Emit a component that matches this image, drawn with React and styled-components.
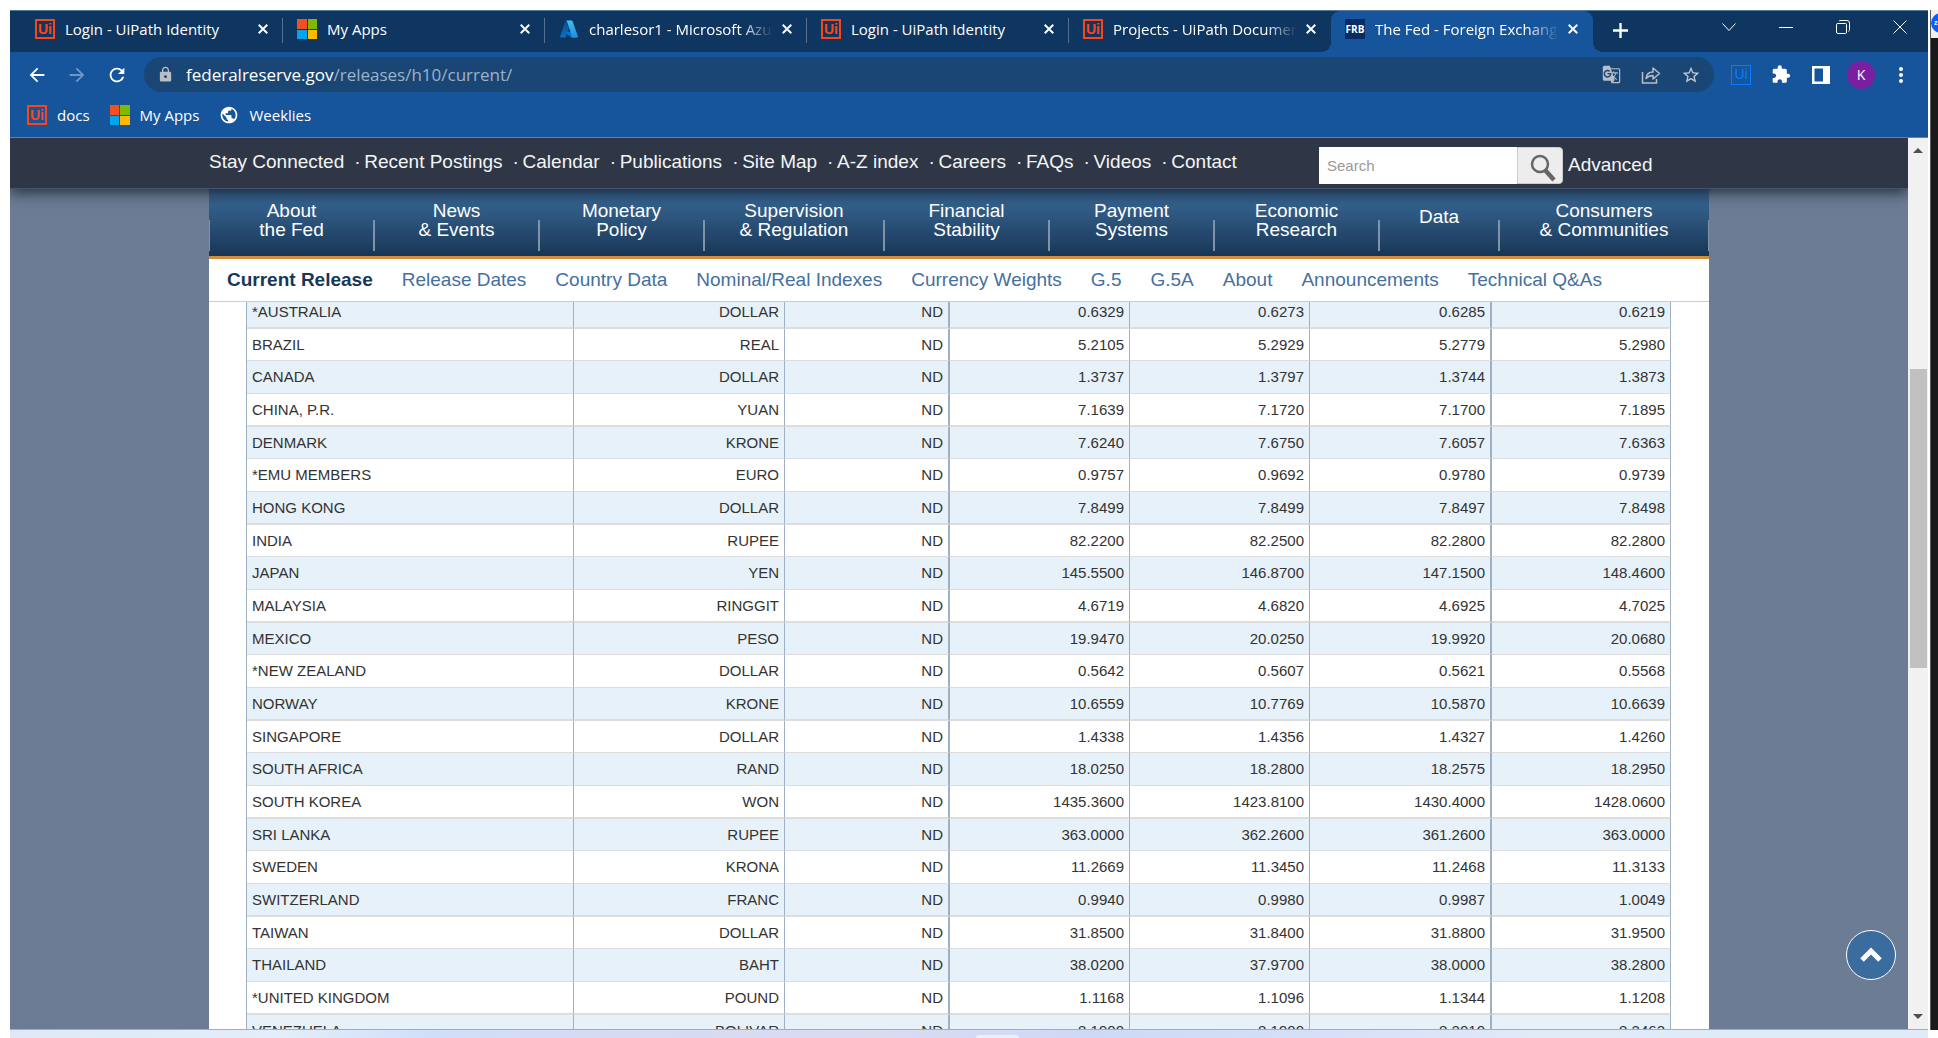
import React from "react";
import styled, { createGlobalStyle, css } from "styled-components";
import { MdExtension, MdPublic, MdLock, MdRefresh, MdArrowBack, MdArrowForward, MdGTranslate, MdStarBorder } from "react-icons/md";

const GlobalStyle = createGlobalStyle`
  *, *::before, *::after { box-sizing: border-box; }
  html, body, #root { height: 100%; }
  body {
    margin: 0;
    overflow: hidden;
    background: #fff;
    font-family: "Liberation Sans", Arial, sans-serif;
  }
  button, input { font: inherit; margin: 0; }
  a { color: inherit; text-decoration: none; }
`;

const chromeFont = css`
  font-family: "Open Sans", "Segoe UI", sans-serif;
`;

/* ---------- desktop ---------- */

const Desktop = styled.div`
  height: 100vh;
  display: flex;
  flex-direction: column;
  padding: 10px 0 0 10px;
`;

const DesktopRow = styled.div`
  flex: 1;
  min-height: 0;
  display: flex;
  gap: 2px;
`;

const Window = styled.div`
  flex: 1;
  min-width: 0;
  display: flex;
  flex-direction: column;
  background: #16549b;
  border-top: 1px solid #55799b;
  border-bottom: 1px solid #a3acbd;
`;

const NeighbourWindow = styled.aside`
  width: 8px;
  display: flex;
  flex-direction: column;
  overflow: hidden;
  background: #1a1a1a;
  border-left: 1px solid #5a5a5a;
`;

const NeighbourTitle = styled.div`
  height: 28px;
  flex: none;
  margin-left: -1px;
  padding: 3px 0 0 1px;
  background: #f0f0f0;
`;

const ZoomLogo = styled.div`
  width: 20px;
  height: 20px;
  border-radius: 50%;
  background: #0b5cff;
  color: #fff;
  font-size: 7px;
  font-weight: bold;
  line-height: 20px;
  padding-left: 3px;
`;

const Taskbar = styled.div`
  height: 8px;
  flex: none;
  display: flex;
  justify-content: center;
  align-items: flex-end;
  margin-right: 10px;
  padding-left: 56px;
  background: linear-gradient(90deg, #dfe8f4 0%, #e3eefa 14%, #cfdffa 22%, #d6dbf4 30%, #dadcf0 45%, #ced9f7 56%, #d3def8 66%, #e0eaf8 80%, #dfebf8 100%);
`;

const TaskbarItem = styled.div`
  width: 43px;
  height: 3px;
  border-radius: 4px 4px 0 0;
  background: #eaf0fc;
`;

/* ---------- tab strip ---------- */

const TabStrip = styled.div`
  height: 41px;
  flex: none;
  display: flex;
  padding-left: 11px;
  background: #0f3661;
  color: #fff;
  ${chromeFont}
`;

const Tab = styled.div`
  position: relative;
  width: 262px;
  display: flex;
  align-items: center;
  padding: 0 12px 5px 14px;
  font-size: 15px;
  &::after {
    content: "";
    position: absolute;
    right: 0;
    top: 7px;
    width: 1px;
    height: 25px;
    background: ${(p) => (p.$divider ? "#55718e" : "transparent")};
  }
  ${(p) =>
    p.$active &&
    css`
      background: #16549b;
      border-radius: 9px 9px 0 0;
      &::before,
      &::after {
        content: "";
        position: absolute;
        top: auto;
        bottom: 0;
        width: 10px;
        height: 10px;
      }
      &::before {
        left: -10px;
        background: radial-gradient(circle at 0 0, transparent 10px, #16549b 10px);
      }
      &::after {
        right: -10px;
        background: radial-gradient(circle at 100% 0, transparent 10px, #16549b 10px);
      }
    `}
`;

const TabTitle = styled.span`
  flex: 1;
  min-width: 0;
  margin: 0 6px 0 10px;
  overflow: hidden;
  white-space: nowrap;
  ${(p) =>
    p.$fade &&
    css`
      mask-image: linear-gradient(90deg, #000 calc(100% - 32px), transparent);
    `}
`;

const IconButton = styled.button`
  width: ${(p) => p.$size || 20}px;
  height: ${(p) => p.$size || 20}px;
  flex: none;
  display: flex;
  align-items: center;
  justify-content: center;
  padding: 0;
  border: 0;
  background: none;
  color: ${(p) => p.$color || "#fff"};
`;

const NewTab = styled(IconButton)`
  margin: 9px 0 0 17px;
`;

const WindowControls = styled.div`
  margin-left: auto;
  display: flex;
  gap: 37px;
  padding: 6px 18px 0 0;
`;

const FrbIcon = styled.span`
  width: 20px;
  height: 20px;
  flex: none;
  background: #0a2a63;
  color: #fff;
  font-size: 10px;
  font-weight: 700;
  line-height: 20px;
  text-align: center;
`;

const UiFrame = styled.span`
  width: 20px;
  height: 20px;
  flex: none;
  border: ${(p) => p.$line || 2}px solid ${(p) => p.$color || "#fa4616"};
  color: ${(p) => p.$color || "#fa4616"};
  font: ${(p) => (p.$line ? 400 : 700)} 14px/16px "Liberation Sans", Arial, sans-serif;
  text-align: center;
`;

const MsGrid = styled.span`
  width: 20px;
  height: 20px;
  flex: none;
  display: grid;
  grid-template-columns: 1fr 1fr;
  gap: 1px;
`;

const Swatch = styled.span`
  background: ${(p) => p.$color};
`;

/* ---------- toolbar ---------- */

const Toolbar = styled.div`
  height: 45px;
  flex: none;
  display: flex;
  align-items: center;
  padding: 0 17px 0 16px;
  color: #fff;
  ${chromeFont}
`;

const NavButtons = styled.div`
  display: flex;
  gap: 18px;
  width: 118px;
`;

const Omnibox = styled.div`
  flex: 1;
  height: 35px;
  display: flex;
  align-items: center;
  padding: 0 13px;
  border-radius: 18px;
  background: #1a4676;
  color: #b9bec4;
`;

const Address = styled.div`
  flex: 1;
  margin-left: 12px;
  font-size: 17px;
  color: #9db2c8;
  white-space: nowrap;
`;

const Host = styled.span`
  color: #fff;
`;

const IconRow = styled.div`
  display: flex;
  align-items: center;
  gap: 20px;
`;

const Extensions = styled(IconRow)`
  margin-left: 17px;
  gap: 16px;
`;

const Avatar = styled.button`
  width: 28px;
  height: 28px;
  padding: 0;
  border: 0;
  border-radius: 50%;
  background: #7b1fa2;
  color: #fff;
  font-size: 14px;
`;

const Bookmarks = styled.nav`
  height: 41px;
  flex: none;
  display: flex;
  gap: 20px;
  padding: 2px 17px 0;
  border-bottom: 1px solid #5c82b5;
  color: #fff;
  ${chromeFont}
`;

const Bookmark = styled.a`
  display: flex;
  align-items: center;
  gap: 10px;
  height: 32px;
  font-size: 15px;
`;

/* ---------- page ---------- */

const Viewport = styled.div`
  flex: 1;
  min-height: 0;
  display: flex;
`;

const Page = styled.div`
  position: relative;
  flex: 1;
  min-width: 0;
  display: flex;
  flex-direction: column;
  overflow: hidden;
  background: #6b7c94;
`;

const UtilityBar = styled.header`
  position: relative;
  z-index: 2;
  height: 51px;
  flex: none;
  background: #2f3746;
  border-bottom: 1px solid #46536a;
  box-shadow: 0 3px 14px rgba(20, 26, 36, 0.85);
  color: #f4f5f7;
`;

const Container = styled.div`
  width: 1500px;
  max-width: 100%;
  margin: 0 auto;
`;

const UtilityInner = styled(Container)`
  display: flex;
  align-items: flex-start;
`;

const UtilityLinks = styled.ul`
  display: flex;
  margin: 0;
  padding: 13px 0 0;
  list-style: none;
  font-size: 19px;
  line-height: 22px;
  white-space: nowrap;
`;

const UtilityItem = styled.li`
  & + &::before {
    content: "·";
    display: inline-block;
    width: 20px;
    padding-left: 10px;
  }
`;

const SearchForm = styled.form`
  display: flex;
  align-items: center;
  flex: none;
  margin-left: auto;
  width: 390px;
  padding-top: 9px;
`;

const SearchInput = styled.input`
  width: 198px;
  height: 37px;
  padding: 0 8px;
  border: 0;
  border-radius: 0;
  background: #fff;
  font-size: 15px;
  &::placeholder {
    color: #999;
    opacity: 1;
  }
`;

const SearchButton = styled.button`
  width: 46px;
  height: 37px;
  padding: 3px 0 0 6px;
  display: flex;
  align-items: center;
  justify-content: center;
  border: 1px solid #ccc;
  border-radius: 0 4px 4px 0;
  background: #ededed;
`;

const Advanced = styled.a`
  margin-left: 5px;
  padding-bottom: 2px;
  font-size: 19px;
  line-height: 22px;
`;

const MainNav = styled.nav`
  height: 70px;
  flex: none;
  display: flex;
  border-bottom: 3px solid #d28c3c;
  background: linear-gradient(#33628f, #335f8a 25%, #183656);
  color: #fff;
`;

const MainNavItem = styled.a`
  position: relative;
  flex: ${(p) => p.$w} 1 0;
  padding: ${(p) => (p.$single ? 18 : 12)}px 0 0;
  font-size: 19px;
  line-height: 19px;
  text-align: center;
  white-space: pre-line;
  &::after {
    content: "";
    position: absolute;
    top: 31px;
    right: -1px;
    width: 2px;
    height: 31px;
    background: #7f93a8;
  }
  &:first-child::before {
    content: "";
    position: absolute;
    top: 31px;
    left: 0;
    width: 1px;
    height: 31px;
    background: #7f93a8;
  }
  &:last-child::after {
    right: 0;
    width: 1px;
  }
`;

const SubNav = styled.nav`
  position: relative;
  z-index: 1;
  height: 43px;
  flex: none;
  display: flex;
  gap: 29px;
  padding: 9px 18px 0;
  border-bottom: 1px solid #ccc;
  background: #fff;
  color: #44709f;
  font-size: 19px;
  line-height: 24px;
  white-space: nowrap;
`;

const SubNavLink = styled.a`
  ${(p) =>
    p.$current &&
    css`
      color: #17375a;
      font-weight: bold;
    `}
`;

const Content = styled(Container)`
  flex: 1;
  min-height: 0;
  display: flex;
  flex-direction: column;
  overflow: hidden;
  background: #fff;
`;

const TableArea = styled.main`
  flex: 1;
  min-height: 0;
  margin-top: -6px;
  padding: 0 38px 0 37px;
  overflow: hidden;
`;

const RatesTable = styled.table`
  width: 100%;
  table-layout: fixed;
  border-collapse: separate;
  border-spacing: 0;
  border-left: 1px solid #9fb1c1;
  color: #333;
  font-size: 15px;
  line-height: 17px;
`;

const Col = styled.col`
  width: ${(p) => p.$share * 100}%;
`;

const Row = styled.tr`
  height: 33px;
  & > * {
    padding: 0 5px;
    text-align: right;
    font-weight: normal;
    border-right: 1px solid #9fb1c1;
    border-bottom: 1px solid #ddd;
  }
  & > :nth-child(3),
  & > :nth-child(6) {
    border-right-width: 2px;
  }
  & > :first-child {
    text-align: left;
  }
  &:nth-child(odd) {
    background: #e6f1f9;
  }
  &:nth-child(3n + 1) > * {
    border-bottom-width: 2px;
  }
  &:nth-child(3n + 2) {
    height: 32px;
  }
  &:nth-child(3n) > * {
    padding-bottom: 1px;
  }
`;

const ToTop = styled.a`
  position: absolute;
  right: 12px;
  bottom: 49px;
  width: 50px;
  height: 50px;
  display: flex;
  align-items: center;
  justify-content: center;
  border: 1px solid #fff;
  border-radius: 50%;
  background: #3a6d9e;
`;

const Scrollbar = styled.div`
  width: 20px;
  flex: none;
  display: flex;
  flex-direction: column;
  align-items: center;
  background: #f1f1f1;
`;

const Arrow = styled.span`
  width: 0;
  height: 0;
  margin: 10px 0;
  border: 5px solid transparent;
  ${(p) =>
    p.$up
      ? css`
          border-top: 0;
          border-bottom-color: #505050;
        `
      : css`
          border-bottom: 0;
          border-top-color: #505050;
        `}
`;

const Track = styled.div`
  flex: 1;
  display: grid;
  grid-template-rows: 49fr 71fr 80fr;
`;

const Thumb = styled.div`
  grid-row: 2;
  width: 17px;
  background: #c1c1c1;
`;

/* ---------- icons ---------- */

const UiIcon = ({ color, line }) => (
  <UiFrame $color={color} $line={line}>Ui</UiFrame>
);

const MicrosoftIcon = () => (
  <MsGrid>
    <Swatch $color="#f25022" />
    <Swatch $color="#7fba00" />
    <Swatch $color="#00a4ef" />
    <Swatch $color="#ffb900" />
  </MsGrid>
);

const AzureIcon = () => (
  <svg width="20" height="20" viewBox="0 0 20 20">
    <defs>
      <linearGradient id="azl" x1="0.6" y1="0" x2="0.3" y2="1">
        <stop offset="0" stopColor="#114a8b" />
        <stop offset="1" stopColor="#0a70c4" />
      </linearGradient>
      <linearGradient id="azr" x1="0" y1="0" x2="0.6" y2="1">
        <stop offset="0" stopColor="#3ccbf4" />
        <stop offset="1" stopColor="#2892df" />
      </linearGradient>
    </defs>
    <path d="M7.2 1.5h5.2L7 17.8a.9.9 0 0 1-.8.6H2a.8.8 0 0 1-.8-1.1L6.4 2.1a.9.9 0 0 1 .8-.6z" fill="url(#azl)" />
    <path d="M15 12.7H6.9a.4.4 0 0 0-.3.7l5.3 4.8c.2.1.3.2.5.2h4.6z" fill="#0078d4" />
    <path d="M13.5 2.1a.9.9 0 0 0-.8-.6H7.1c.4 0 .7.2.8.6l5.2 15.2a.8.8 0 0 1-.8 1.1h5.8a.8.8 0 0 0 .8-1.1z" fill="url(#azr)" />
  </svg>
);

const Lines = ({ d, size = 14, w = 1, color = "currentColor" }) => (
  <svg width={size} height={size} viewBox="0 0 14 14" fill="none" stroke={color} strokeWidth={w}>
    <path d={d} />
  </svg>
);

const ShareIcon = () => (
  <svg width="20" height="20" viewBox="0 0 20 20" fill="none" stroke="currentColor" strokeWidth="1.5">
    <path d="M1.5 7v11h14v-4" />
    <path d="M5 13.5c.5-4.5 3-6.5 7-6.5V3L18.5 8.5 12 14v-3.5c-3 0-5 .8-7 3z" strokeLinejoin="round" />
  </svg>
);

const SearchIcon = () => (
  <svg width="28" height="31" viewBox="0 0 28 31" fill="none" stroke="#666">
    <circle cx="11" cy="12" r="8" strokeWidth="2.5" />
    <path d="M16.5 18.5L25 28" strokeWidth="4.5" />
  </svg>
);

/* ---------- data ---------- */

const TABS = [
  { title: "Login - UiPath Identity", icon: <UiIcon />, divider: true },
  { title: "My Apps", icon: <MicrosoftIcon />, divider: true },
  { title: "charlesor1 - Microsoft Azure", icon: <AzureIcon />, divider: true, fade: true },
  { title: "Login - UiPath Identity", icon: <UiIcon />, divider: true },
  { title: "Projects - UiPath Documentation", icon: <UiIcon />, fade: true },
  { title: "The Fed - Foreign Exchange Rates", icon: <FrbIcon>FRB</FrbIcon>, fade: true, active: true },
];

const UTILITY = ["Stay Connected", "Recent Postings", "Calendar", "Publications", "Site Map", "A-Z index", "Careers", "FAQs", "Videos", "Contact"];

const MAIN_NAV = [
  ["About\nthe Fed", 165],
  ["News\n& Events", 165],
  ["Monetary\nPolicy", 165],
  ["Supervision\n& Regulation", 180],
  ["Financial\nStability", 165],
  ["Payment\nSystems", 165],
  ["Economic\nResearch", 165],
  ["Data", 120],
  ["Consumers\n& Communities", 210],
];

const SUB_NAV = ["Current Release", "Release Dates", "Country Data", "Nominal/Real Indexes", "Currency Weights", "G.5", "G.5A", "About", "Announcements", "Technical Q&As"];

const COLUMNS = [327, 211, 165, 180, 180, 182, 179];
const COLUMNS_TOTAL = COLUMNS.reduce((sum, w) => sum + w, 0);

const RATES = [
  ["*AUSTRALIA", "DOLLAR", "ND", "0.6329", "0.6273", "0.6285", "0.6219"],
  ["BRAZIL", "REAL", "ND", "5.2105", "5.2929", "5.2779", "5.2980"],
  ["CANADA", "DOLLAR", "ND", "1.3737", "1.3797", "1.3744", "1.3873"],
  ["CHINA, P.R.", "YUAN", "ND", "7.1639", "7.1720", "7.1700", "7.1895"],
  ["DENMARK", "KRONE", "ND", "7.6240", "7.6750", "7.6057", "7.6363"],
  ["*EMU MEMBERS", "EURO", "ND", "0.9757", "0.9692", "0.9780", "0.9739"],
  ["HONG KONG", "DOLLAR", "ND", "7.8499", "7.8499", "7.8497", "7.8498"],
  ["INDIA", "RUPEE", "ND", "82.2200", "82.2500", "82.2800", "82.2800"],
  ["JAPAN", "YEN", "ND", "145.5500", "146.8700", "147.1500", "148.4600"],
  ["MALAYSIA", "RINGGIT", "ND", "4.6719", "4.6820", "4.6925", "4.7025"],
  ["MEXICO", "PESO", "ND", "19.9470", "20.0250", "19.9920", "20.0680"],
  ["*NEW ZEALAND", "DOLLAR", "ND", "0.5642", "0.5607", "0.5621", "0.5568"],
  ["NORWAY", "KRONE", "ND", "10.6559", "10.7769", "10.5870", "10.6639"],
  ["SINGAPORE", "DOLLAR", "ND", "1.4338", "1.4356", "1.4327", "1.4260"],
  ["SOUTH AFRICA", "RAND", "ND", "18.0250", "18.2800", "18.2575", "18.2950"],
  ["SOUTH KOREA", "WON", "ND", "1435.3600", "1423.8100", "1430.4000", "1428.0600"],
  ["SRI LANKA", "RUPEE", "ND", "363.0000", "362.2600", "361.2600", "363.0000"],
  ["SWEDEN", "KRONA", "ND", "11.2669", "11.3450", "11.2468", "11.3133"],
  ["SWITZERLAND", "FRANC", "ND", "0.9940", "0.9980", "0.9987", "1.0049"],
  ["TAIWAN", "DOLLAR", "ND", "31.8500", "31.8400", "31.8800", "31.9500"],
  ["THAILAND", "BAHT", "ND", "38.0200", "37.9700", "38.0000", "38.2800"],
  ["*UNITED KINGDOM", "POUND", "ND", "1.1168", "1.1096", "1.1344", "1.1208"],
  ["VENEZUELA", "BOLIVAR", "ND", "8.1900", "8.1900", "8.2010", "8.2463"],
];

/* ---------- app ---------- */

const BrowserTab = ({ tab }) => (
  <Tab $active={tab.active} $divider={tab.divider}>
    {tab.icon}
    <TabTitle $fade={tab.fade}>{tab.title}</TabTitle>
    <IconButton $size={16} aria-label="Close tab">
      <Lines d="M2 2L12 12M12 2L2 12" size={12} w={2.2} />
    </IconButton>
  </Tab>
);

export default function App() {
  return (
    <>
      <GlobalStyle />
      <Desktop>
        <DesktopRow>
          <Window>
            <TabStrip>
              {TABS.map((tab, i) => (
                <BrowserTab key={i} tab={tab} />
              ))}
              <NewTab aria-label="New tab">
                <Lines d="M7 0V14M0 7H14" size={15} w={2.2} />
              </NewTab>
              <WindowControls>
                <IconButton aria-label="Search tabs"><Lines d="M.5 3.5L7 10.5L13.5 3.5" /></IconButton>
                <IconButton aria-label="Minimize"><Lines d="M0 7.5H14" /></IconButton>
                <IconButton aria-label="Restore"><Lines d="M2 3.5H9.5Q10.5 3.5 10.5 4.5V12Q10.5 13.5 9.5 13.5H2Q.5 13.5 .5 12V4.5Q.5 3.5 2 3.5ZM3 1Q3.5 .5 5 .5H11Q13.5 .5 13.5 3V9.5Q13.5 11 12.5 11.5" /></IconButton>
                <IconButton aria-label="Close"><Lines d="M.5 .5L13.5 13.5M13.5 .5L.5 13.5" /></IconButton>
              </WindowControls>
            </TabStrip>

            <Toolbar>
              <NavButtons>
                <IconButton $size={22} aria-label="Back"><MdArrowBack size={22} /></IconButton>
                <IconButton $size={22} $color="#6f97c6" aria-label="Forward"><MdArrowForward size={22} /></IconButton>
                <IconButton $size={22} aria-label="Reload"><MdRefresh size={24} /></IconButton>
              </NavButtons>
              <Omnibox>
                <MdLock size={17} />
                <Address>
                  <Host>federalreserve.gov</Host>/releases/h10/current/
                </Address>
                <IconRow>
                  <IconButton $color="#b9bec4" aria-label="Translate"><MdGTranslate size={19} /></IconButton>
                  <IconButton $color="#b9bec4" aria-label="Share"><ShareIcon /></IconButton>
                  <IconButton $color="#c3c8cc" aria-label="Bookmark"><MdStarBorder size={22} /></IconButton>
                </IconRow>
              </Omnibox>
              <Extensions>
                <IconRow>
                  <UiIcon color="#0a7bff" line={1} />
                  <IconButton aria-label="Extensions"><MdExtension size={21} /></IconButton>
                  <IconButton aria-label="Side panel">
                    <svg width="18" height="18" viewBox="0 0 18 18">
                      <path fill="#fff" fillRule="evenodd" d="M0 0H18V18H0ZM2.5 2.5V15.5H11V2.5Z" />
                    </svg>
                  </IconButton>
                </IconRow>
                <Avatar aria-label="Profile">K</Avatar>
                <IconButton aria-label="Menu">
                  <svg width="4" height="16" viewBox="0 0 4 16" fill="#fff">
                    <circle cx="2" cy="2" r="2" />
                    <circle cx="2" cy="8" r="2" />
                    <circle cx="2" cy="14" r="2" />
                  </svg>
                </IconButton>
              </Extensions>
            </Toolbar>

            <Bookmarks>
              <Bookmark href="#docs"><UiIcon />docs</Bookmark>
              <Bookmark href="#apps"><MicrosoftIcon />My Apps</Bookmark>
              <Bookmark href="#weeklies"><MdPublic size={20} />Weeklies</Bookmark>
            </Bookmarks>

            <Viewport>
              <Page>
                <UtilityBar>
                  <UtilityInner>
                    <UtilityLinks>
                      {UTILITY.map((label) => (
                        <UtilityItem key={label}><a href="#utility">{label}</a></UtilityItem>
                      ))}
                    </UtilityLinks>
                    <SearchForm>
                      <SearchInput type="text" placeholder="Search" aria-label="Search" />
                      <SearchButton type="button" aria-label="Submit search"><SearchIcon /></SearchButton>
                      <Advanced href="#advanced">Advanced</Advanced>
                    </SearchForm>
                  </UtilityInner>
                </UtilityBar>

                <Content>
                  <MainNav>
                    {MAIN_NAV.map(([label, w]) => (
                      <MainNavItem key={label} href="#nav" $w={w} $single={!label.includes("\n")}>{label}</MainNavItem>
                    ))}
                  </MainNav>
                  <SubNav>
                    {SUB_NAV.map((label, i) => (
                      <SubNavLink key={label} href="#release" $current={i === 0}>{label}</SubNavLink>
                    ))}
                  </SubNav>
                  <TableArea>
                    <RatesTable>
                      <colgroup>
                        {COLUMNS.map((w, i) => <Col key={i} $share={w / COLUMNS_TOTAL} />)}
                      </colgroup>
                      <tbody>
                        {RATES.map(([country, ...cells]) => (
                          <Row key={country}>
                            <th scope="row">{country}</th>
                            {cells.map((cell, i) => <td key={i}>{cell}</td>)}
                          </Row>
                        ))}
                      </tbody>
                    </RatesTable>
                  </TableArea>
                </Content>

                <ToTop href="#top" aria-label="Back to top">
                  <svg width="22" height="16" viewBox="0 0 22 16" fill="none" stroke="#fff" strokeWidth="5">
                    <path d="M2 13L11 4L20 13" />
                  </svg>
                </ToTop>
              </Page>
              <Scrollbar>
                <Arrow $up />
                <Track><Thumb /></Track>
                <Arrow />
              </Scrollbar>
            </Viewport>
          </Window>
          <NeighbourWindow>
            <NeighbourTitle><ZoomLogo>zoom</ZoomLogo></NeighbourTitle>
          </NeighbourWindow>
        </DesktopRow>
        <Taskbar><TaskbarItem /></Taskbar>
      </Desktop>
    </>
  );
}
